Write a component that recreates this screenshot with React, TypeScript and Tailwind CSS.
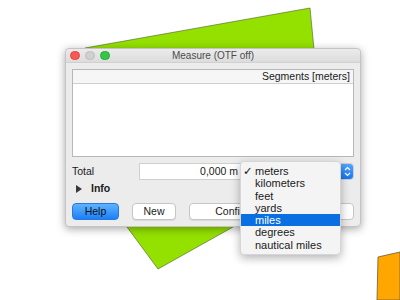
import React from 'react';

const units = ['meters', 'kilometers', 'feet', 'yards', 'miles', 'degrees', 'nautical miles'];

// Фоновые фигуры на холсте
function Shapes() {
  return (
    <svg className="absolute inset-0" width={400} height={300} viewBox="0 0 400 300">
      <polygon
        points="85,48 310,8 317,80 233,227 158,269 127,227 95,120"
        fill="#94e100"
        stroke="#4c5a2a"
        strokeWidth={0.6}
      />
      <polygon points="378,257 400,252 400,300 377,300" fill="#ffa600" stroke="#6b5a3a" strokeWidth={0.8} />
    </svg>
  );
}

// Выпадающий список единиц
function UnitsPopup() {
  return (
    <div className="absolute left-[174px] top-[112px] w-[101px] py-[3px] rounded-[4px] bg-[#f4f4f4] border border-[#d6d6d6] shadow-[0_3px_10px_rgba(0,0,0,0.3)]">
      {units.map((u) => (
        <div
          key={u}
          className={`relative h-[12.3px] leading-[12.3px] pl-[14px] text-[11px] ${
            u === 'miles' ? 'bg-[#0a6fe0] text-white' : 'text-[#1a1a1a]'
          }`}
        >
          {u === 'meters' && (
            <span className="absolute left-[2px] top-0 text-[11.5px] font-['DejaVu_Sans',sans-serif]">✓</span>
          )}
          {u}
        </div>
      ))}
    </div>
  );
}

export default function App() {
  return (
    <div className="relative w-[400px] h-[300px] bg-white overflow-hidden font-['Liberation_Sans',Arial,sans-serif] text-[10.5px] text-[#1a1a1a]">
      <Shapes />

      {/* Окно */}
      <div className="absolute left-[65px] top-[48px] w-[296px] h-[179px] rounded-[4px] bg-[#ececec] shadow-[0_2px_8px_rgba(0,0,0,0.35)] border border-[#c4c4c4] flex flex-col overflow-visible">
        {/* Заголовок */}
        <div className="relative h-[14px] flex items-center rounded-t-[4px] bg-gradient-to-b from-[#ebebeb] to-[#dcdcdc] border-b border-[#d0d0d0]">
          <div className="flex gap-[5.5px] pl-[4px]">
            <span className="w-[9.5px] h-[9.5px] rounded-full bg-[#fc5753] border border-[#df4744]" />
            <span className="w-[9.5px] h-[9.5px] rounded-full bg-[#d0d0d0] border border-[#bdbdbd]" />
            <span className="w-[9.5px] h-[9.5px] rounded-full bg-[#33c748] border border-[#27aa35]" />
          </div>
          <div className="absolute inset-0 flex items-center justify-center text-[10px] text-[#4b4b4b]">
            Measure (OTF off)
          </div>
        </div>

        <div className="flex-1 flex flex-col px-[6px] pt-[6px]">
          {/* Таблица */}
          <div className="h-[88px] bg-white border border-[#b8b8b8] flex flex-col">
            <div className="h-[14px] bg-[#f6f6f6] border-b border-[#cfcfcf] flex items-center justify-end pr-[3px]">
              Segments [meters]
            </div>
          </div>

          {/* Итого */}
          <div className="mt-[6px] h-[17px] flex items-center">
            <div className="w-[67px]">Total</div>
            <div className="w-[102px] h-[17px] bg-white border border-[#cfcfcf] flex items-center justify-end pr-[2px]">
              0,000 m
            </div>
            <div className="ml-[3px] flex-1 h-[17px] bg-white border border-[#cfcfcf] rounded-[3px] flex justify-end">
              <div className="w-[12px] h-full rounded-r-[3px] bg-gradient-to-b from-[#4ea4fb] to-[#1677f0] flex flex-col items-center justify-center">
                <svg width={7} height={11} viewBox="0 0 7 11" fill="none" stroke="white" strokeWidth={1.2}>
                  <path d="M1 4 L3.5 1.5 L6 4" />
                  <path d="M1 7 L3.5 9.5 L6 7" />
                </svg>
              </div>
            </div>
          </div>

          {/* Инфо */}
          <div className="mt-[3px] h-[12px] flex items-center">
            <svg width={6} height={8} viewBox="0 0 6 8" className="ml-[4px]">
              <polygon points="0,0 6,4 0,8" fill="#3a3a3a" />
            </svg>
            <span className="ml-[9px] font-bold">Info</span>
          </div>

          {/* Кнопки */}
          <div className="mt-[8px] h-[17px] flex gap-[13px]">
            <button className="w-[47px] h-[17px] rounded-[4px] bg-gradient-to-b from-[#5db2ff] to-[#1a7ff8] border border-[#2a78dc] text-[#111]">
              Help
            </button>
            <button className="w-[44px] h-[17px] rounded-[4px] bg-white border border-[#c6c6c6] shadow-[0_1px_0_rgba(0,0,0,0.08)]">
              New
            </button>
            <button className="w-[98px] h-[17px] rounded-[4px] bg-white border border-[#c6c6c6] shadow-[0_1px_0_rgba(0,0,0,0.08)]">
              Configure
            </button>
            <button className="flex-1 h-[17px] rounded-[4px] bg-white border border-[#c6c6c6] text-[#c8c8c8]">
              Close
            </button>
          </div>
        </div>

        <UnitsPopup />
      </div>
    </div>
  );
}
